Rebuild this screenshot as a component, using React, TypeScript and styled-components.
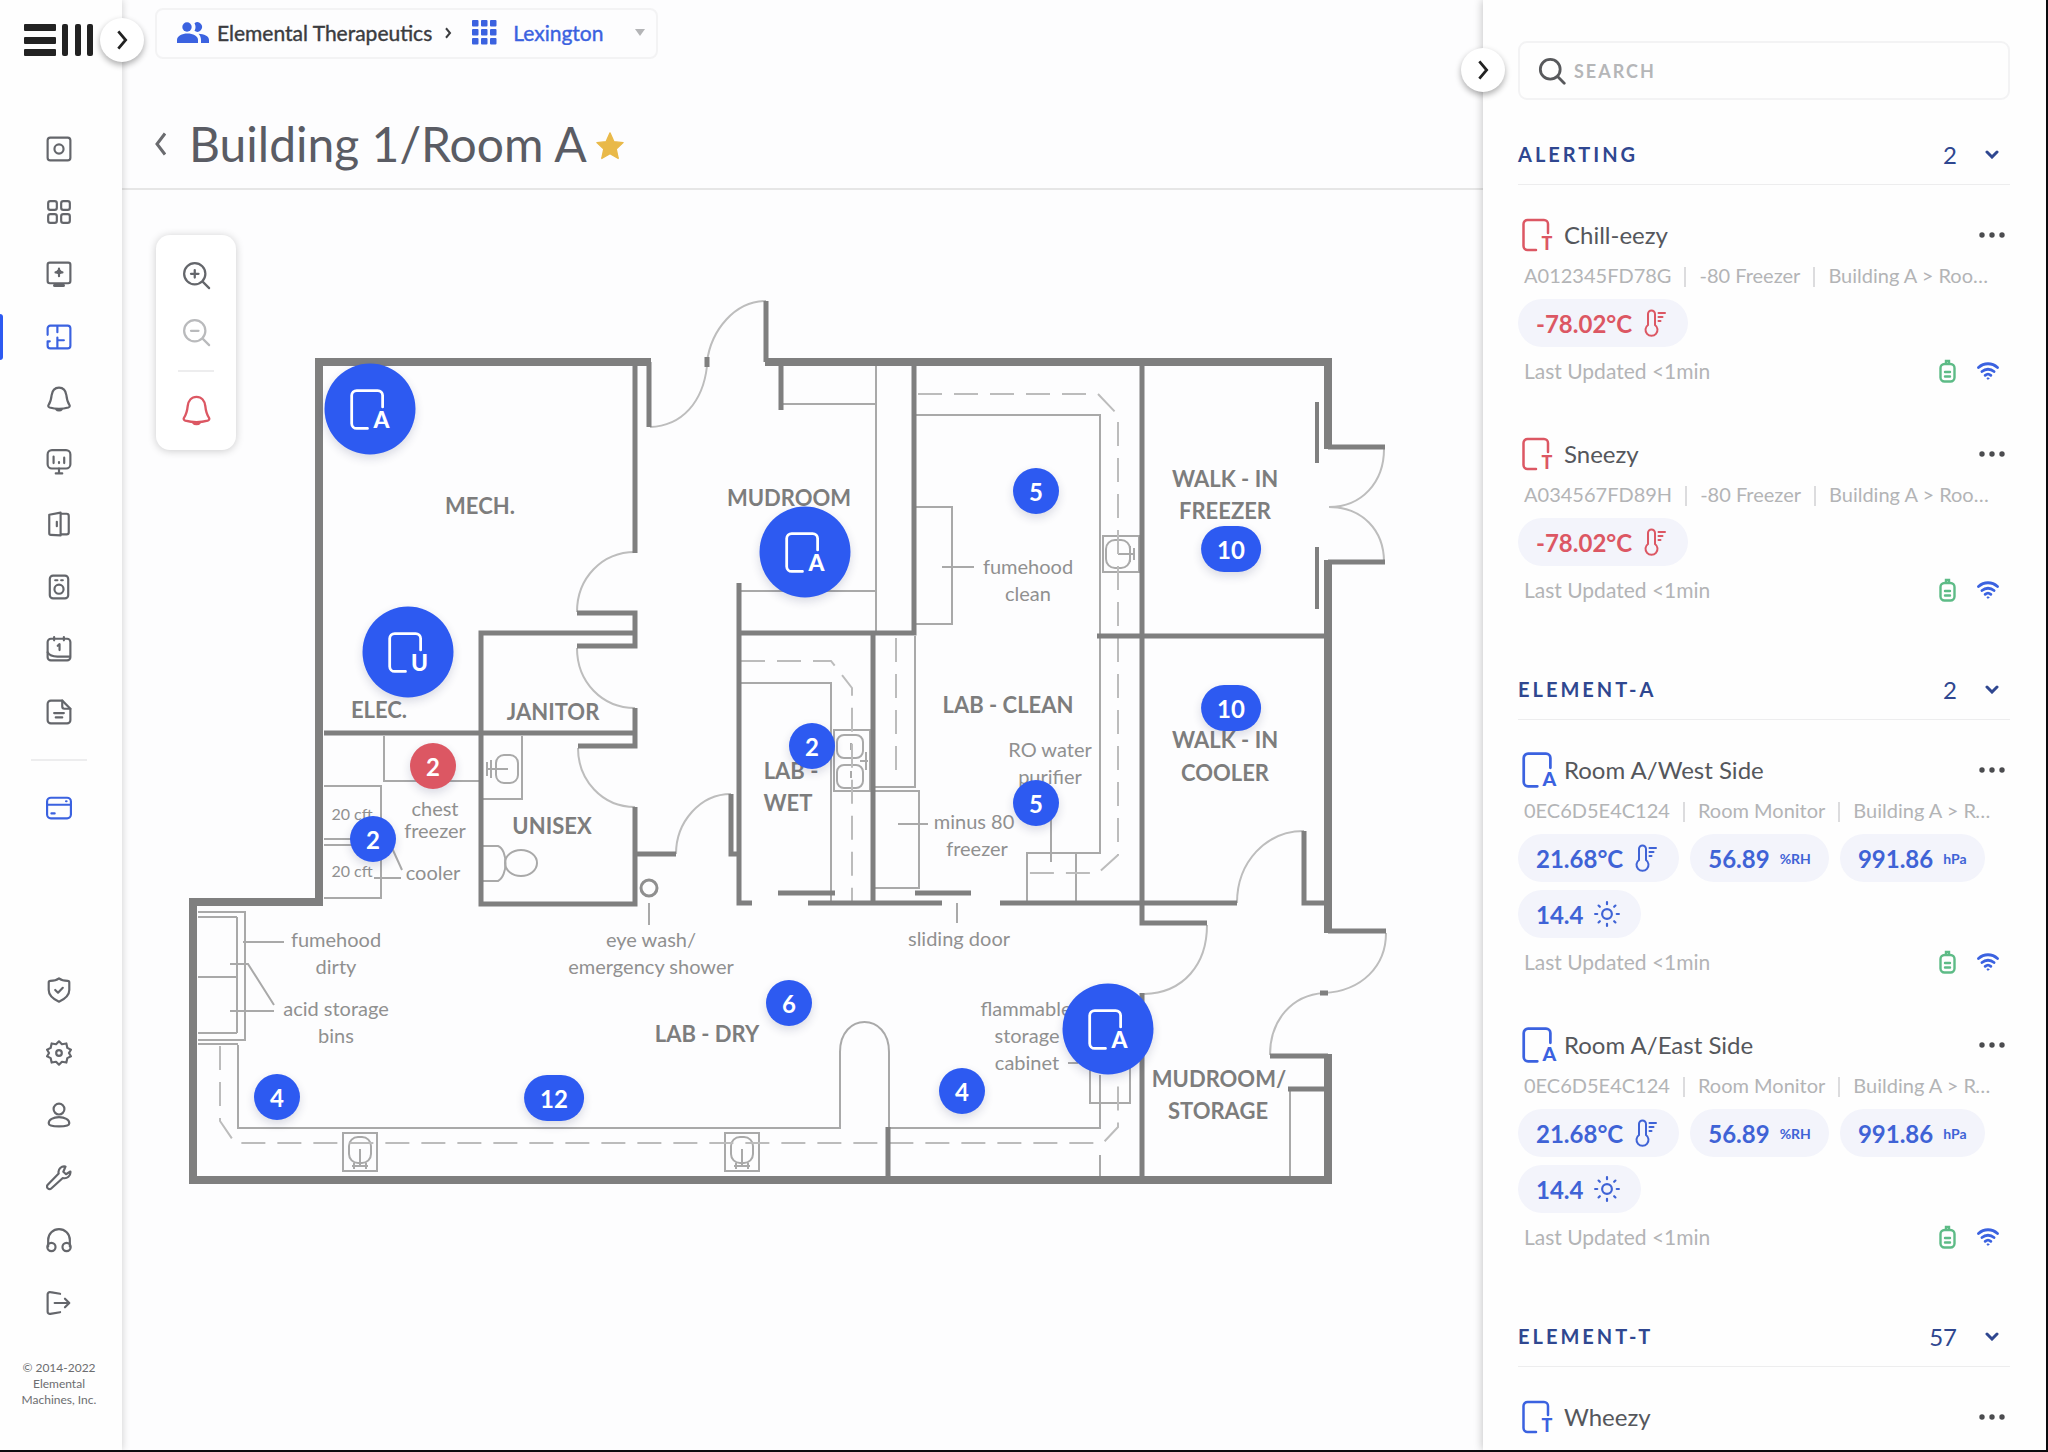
import React, { useState } from "react";
import styled, { createGlobalStyle, css } from "styled-components";

const color = {
  blue: "#2d5af1",
  link: "#3b62e0",
  navy: "#2f4790",
  reading: "#3f63d6",
  red: "#dc5763",
  gold: "#e9b949",
  ink: "#55575c",
  icon: "#64666b",
  muted: "#b3b4b6",
  line: "#ededee",
  wall: "#7f7f7f",
  thin: "#a9a9a9",
  pill: "#f3f4fb",
};

const GlobalStyle = createGlobalStyle`
  *, *::before, *::after { box-sizing: border-box; }
  body {
    margin: 0;
    background: #fdfdfe;
    color: ${color.ink};
    font-family: Lato, "Open Sans", "Liberation Sans", sans-serif;
    font-size: 20px;
  }
  button, input, select { font: inherit; color: inherit; }
  button { background: none; border: 0; padding: 0; cursor: pointer; }
  ul { list-style: none; margin: 0; padding: 0; }
  h1, h2, h3, p { margin: 0; font-weight: inherit; font-size: inherit; }
  svg { display: block; flex: none; }
`;

/* ---------- shell ---------- */

const Shell = styled.div`
  display: grid;
  grid-template-columns: 122px minmax(0, 1fr) 563px;
  height: 100vh;
  border-right: 2px solid #0b0b0e;
  border-bottom: 2px solid #0b0b0e;
  overflow: hidden;
`;

const Toggle = styled.button<{ $top: number; $edge: "left" | "right" }>`
  position: absolute;
  top: ${(p) => p.$top}px;
  ${(p) => p.$edge}: -22px;
  z-index: 3;
  display: grid;
  place-items: center;
  width: 44px;
  height: 44px;
  border-radius: 50%;
  background: #fff;
  box-shadow: 0 3px 6px rgba(0, 0, 0, 0.32);
  color: #222;
`;

/* ---------- sidebar ---------- */

const Sidebar = styled.nav`
  position: relative;
  z-index: 2;
  display: flex;
  flex-direction: column;
  align-items: center;
  padding: 24px 4px 42px 0;
  background: #fefefe;
  box-shadow: 1px 0 7px rgba(0, 0, 0, 0.16);
`;

const Logo = styled.a`
  display: block;
  height: 32px;
  margin-bottom: 80px;
`;

const NavList = styled.ul<{ $height: number }>`
  display: flex;
  flex-direction: column;
  justify-content: space-between;
  align-items: center;
  width: 100%;
  height: ${(p) => p.$height}px;
`;

const NavItem = styled.li<{ $active?: boolean }>`
  position: relative;
  display: flex;
  justify-content: center;
  width: 100%;
  ${(p) =>
    p.$active &&
    css`
      &::before {
        content: "";
        position: absolute;
        left: 0;
        top: -10px;
        width: 3px;
        height: 46px;
        border-radius: 0 4px 4px 0;
        background: ${color.blue};
      }
    `}
`;

const NavLink = styled.a<{ $accent?: boolean }>`
  display: block;
  color: ${(p) => (p.$accent ? color.link : color.icon)};
`;

const NavRule = styled.hr`
  width: 56px;
  height: 2px;
  margin: 34px 0;
  border: 0;
  background: ${color.line};
`;

const NavSpacer = styled.div`
  flex: 1;
`;

const Copyright = styled.p`
  margin-top: 44px;
  text-align: center;
  font-size: 12px;
  line-height: 16px;
  color: #6c6d70;
`;

/* ---------- main column ---------- */

const Main = styled.main`
  display: flex;
  flex-direction: column;
  min-width: 0;
`;

const Header = styled.header`
  padding: 8px 33px 0;
  border-bottom: 2px solid #e6e6e6;
`;

const Crumbs = styled.div`
  display: inline-flex;
  align-items: center;
  height: 51px;
  padding: 0 10px 2px 20px;
  border: 2px solid #f3f3f4;
  border-radius: 8px;
  font-size: 21px;
`;

const CrumbLink = styled.a`
  display: flex;
  align-items: center;
  gap: 8px;
  color: #3b3c3f;
  text-decoration: none;
  -webkit-text-stroke: 0.4px currentColor;
`;

const CrumbArrow = styled.span`
  display: flex;
  padding: 0 18px 0 10px;
  color: #3b3c3f;
`;

const SiteField = styled.label`
  display: flex;
  align-items: center;
  gap: 16px;
  color: ${color.link};
`;

const SiteSelect = styled.select`
  width: 105px;
  padding: 0;
  border: 0;
  background: none;
  appearance: none;
  color: ${color.link};
  -webkit-text-stroke: 0.4px currentColor;
  outline: none;
`;

const TitleRow = styled.div`
  display: flex;
  align-items: center;
  height: 129px;
  padding-top: 42px;
  padding-bottom: 2px;
`;

const BackButton = styled.button`
  width: 11px;
  margin-right: 23px;
  color: #6a6b6f;
`;

const Title = styled.h1`
  font-size: 48px;
  line-height: 56px;
  color: #5a5c64;
`;

const StarButton = styled.button`
  margin: 4px 0 0 8px;
  color: ${color.gold};
`;

const Canvas = styled.section`
  position: relative;
  flex: 1;
  min-height: 0;
  padding: 100px 83px 0 58px;
  overflow: hidden;
`;

const Tools = styled.div`
  position: absolute;
  top: 45px;
  left: 34px;
  z-index: 2;
  display: flex;
  flex-direction: column;
  align-items: center;
  gap: 27px;
  width: 80px;
  padding: 25px 0 24px;
  border-radius: 14px;
  background: #fff;
  box-shadow: 0 1px 8px rgba(0, 0, 0, 0.2);
`;

const ToolButton = styled.button<{ $tone: string }>`
  color: ${(p) => p.$tone};
`;

const ToolRule = styled.hr`
  width: 36px;
  height: 2px;
  margin: -4px 0;
  border: 0;
  background: ${color.line};
`;

const Plan = styled.div`
  position: relative;
  width: 100%;
`;

const PlanDrawing = styled.svg`
  width: 100%;
  height: auto;
  overflow: visible;
`;

const RoomName = styled.text`
  font-size: 22px;
  font-weight: 700;
  fill: #7d7d7d;
`;

const Note = styled.text<{ $small?: boolean }>`
  font-size: ${(p) => (p.$small ? 16 : 20)}px;
  fill: #909090;
`;

const pinBase = css`
  position: absolute;
  display: grid;
  place-items: center;
  transform: translate(-50%, -50%);
  color: #fff;
  box-shadow: 0 4px 10px rgba(30, 40, 90, 0.16);
`;

const DevicePin = styled.button`
  ${pinBase}
  width: 91px;
  height: 91px;
  border-radius: 50%;
  background: ${color.blue};
`;

const CountPin = styled.button<{ $alert?: boolean }>`
  ${pinBase}
  min-width: 46px;
  height: 46px;
  padding: 0 16px;
  border-radius: 23px;
  background: ${(p) => (p.$alert ? color.red : color.blue)};
  font-size: 24px;
  font-weight: 700;
`;

/* ---------- right panel ---------- */

const Panel = styled.aside`
  position: relative;
  z-index: 2;
  min-width: 0;
  min-height: 0;
  background: #fefefe;
  box-shadow: -1px 0 8px rgba(0, 0, 0, 0.22);
`;

const PanelScroll = styled.div`
  height: 100%;
  padding: 41px 36px 0 35px;
  overflow-y: auto;
  scrollbar-width: none;
`;

const Search = styled.label`
  display: flex;
  align-items: center;
  gap: 8px;
  height: 59px;
  margin-bottom: 24px;
  padding: 0 18px;
  border: 2px solid #f3f3f4;
  border-radius: 9px;
  color: #58595c;
`;

const SearchInput = styled.input`
  flex: 1;
  min-width: 0;
  padding: 0;
  border: 0;
  background: none;
  outline: none;
  font-size: 18px;
  font-weight: 700;
  letter-spacing: 2px;
  &::placeholder {
    color: #b5b6b8;
    opacity: 1;
  }
`;

const Group = styled.section`
  & + & {
    margin-top: 57px;
  }
`;

const GroupHead = styled.button`
  display: flex;
  align-items: center;
  width: 100%;
  height: 61px;
  border-bottom: 1px solid ${color.line};
  color: ${color.navy};
  text-align: left;
`;

const GroupTitle = styled.h2`
  flex: 1;
  font-size: 20px;
  font-weight: 700;
  letter-spacing: 3px;
`;

const GroupCount = styled.span`
  padding-right: 28px;
  font-size: 24px;
`;

const GroupChevron = styled.span`
  padding-right: 11px;
`;

const DeviceList = styled.ul`
  display: flex;
  flex-direction: column;
  gap: 54px;
  padding-top: 33px;
`;

const DeviceCard = styled.li`
  display: flex;
  flex-direction: column;
  gap: 12px;
`;

const DeviceHead = styled.div`
  display: flex;
  align-items: center;
  gap: 10px;
  height: 33px;
  padding: 0 5px 0 3px;
`;

const AccentIcon = styled.span<{ $alert?: boolean }>`
  flex: none;
  width: 33px;
  color: ${(p) => (p.$alert ? color.red : color.link)};
`;

const DeviceName = styled.h3`
  flex: 1;
  font-size: 24px;
  line-height: 32px;
`;

const MoreButton = styled.button`
  color: #4b4c4f;
`;

const Meta = styled.p`
  padding: 0 14px 0 6px;
  overflow: hidden;
  font-size: 20px;
  line-height: 24px;
  white-space: nowrap;
  text-overflow: ellipsis;
  color: ${color.muted};
`;

const MetaPart = styled.span`
  & + &::before {
    content: "";
    display: inline-block;
    width: 2px;
    height: 20px;
    margin: 0 13px;
    vertical-align: -4px;
    background: #dcdcde;
  }
`;

const Readings = styled.div`
  display: flex;
  flex-wrap: wrap;
  gap: 8px 11px;
`;

const Pill = styled.span<{ $alert?: boolean; $unit?: boolean }>`
  display: inline-flex;
  align-items: center;
  gap: ${(p) => (p.$unit ? 10 : 11)}px;
  height: 48px;
  padding: 0 ${(p) => (p.$unit ? 18 : 21)}px 0 18px;
  border-radius: 24px;
  background: ${color.pill};
  color: ${(p) => (p.$alert ? color.red : color.reading)};
  font-size: 24px;
  font-weight: 700;
`;

const Unit = styled.small`
  font-size: 14px;
`;

const DeviceFoot = styled.div`
  display: flex;
  align-items: center;
  height: 24px;
  padding: 0 11px 0 6px;
  color: ${color.muted};
`;

const Updated = styled.span`
  flex: 1;
  font-size: 21px;
  line-height: 24px;
`;

const Signals = styled.span`
  display: flex;
  align-items: center;
  gap: 21px;
`;

/* ---------- icons ---------- */

type IconProps = { size?: number; stroke?: number; children?: React.ReactNode };

const Icon = ({ size = 26, stroke = 2, children }: IconProps) => (
  <svg
    width={size}
    height={size}
    viewBox="0 0 24 24"
    fill="none"
    stroke="currentColor"
    strokeWidth={stroke}
    strokeLinecap="round"
    strokeLinejoin="round"
    aria-hidden="true"
  >
    {children}
  </svg>
);

const bell = (
  <>
    <path d="M12 1.500c-4 0-6.300 3.200-6.800 7-.4 4-1 6.500-2.900 9.200-.6 1 0 1.800 1 2.100 5.500 1.500 11.900 1.500 17.400 0 1-.3 1.600-1.100 1-2.100-1.900-2.700-2.500-5.200-2.900-9.200-.5-3.800-2.800-7-6.800-7Z" />
    <path d="M9.500 21.500c1 1.400 4 1.400 5 0Z" fill="currentColor" />
  </>
);

const glyphs: Record<string, React.ReactNode> = {
  monitor: (
    <>
      <rect x="1.500" y="1.500" width="21" height="21" rx="2.500" />
      <circle cx="12" cy="12" r="4.200" />
    </>
  ),
  dashboard: (
    <>
      <rect x="2" y="2" width="8" height="8" rx="2" />
      <rect x="14" y="2" width="8" height="8" rx="2" />
      <rect x="2" y="14" width="8" height="8" rx="2" />
      <rect x="14" y="14" width="8" height="8" rx="2" />
    </>
  ),
  gateway: (
    <>
      <rect x="1.500" y="1.500" width="21" height="19" rx="2" />
      <path d="M8 22.500h8" strokeWidth="3" />
      <path d="M12 7v7M8.800 10.500h6.400" />
      <path d="m12 7.500 3 3-3 1.500-3-1.500Z" fill="currentColor" strokeWidth="1" />
    </>
  ),
  floorplan: (
    <path d="M1.500 10V4A2.500 2.500 0 0 1 4 1.500h16A2.500 2.500 0 0 1 22.500 4v16a2.500 2.500 0 0 1-2.500 2.500H4A2.500 2.500 0 0 1 1.500 20v-4M1.500 16h2M10.500 1.500v6M10.500 12.500v10M10.500 15h6" />
  ),
  alerts: bell,
  analytics: (
    <>
      <rect x="1.500" y="1" width="21" height="17" rx="4" />
      <path d="M7 7v6M12 12v1M16.800 8v5M12 18v4M9 22.500h6" />
    </>
  ),
  door: (
    <>
      <path d="M3 3.500 13.500 1.500v21L4.500 22A1.500 1.500 0 0 1 3 20.500ZM13.500 2.500H19A2 2 0 0 1 21 4.500v15a2 2 0 0 1-2 2h-5.500" />
      <path d="M10 10v4" />
    </>
  ),
  appliance: (
    <>
      <rect x="3.500" y="1.500" width="17" height="21" rx="3" />
      <circle cx="12" cy="14" r="4.200" />
      <path d="M8.500 5.800h2M14 5.800h1.500" />
    </>
  ),
  calendar: (
    <>
      <path d="M4.500 2.500h15a3 3 0 0 1 3 3v14a3 3 0 0 1-3 3h-15a3 3 0 0 1-3-3v-14a3 3 0 0 1 3-3Z" />
      <path d="M7.500 1v3M16.500 1v3M1.500 15c2 3.500 5 4 9 4h11.500M10.800 9l1.700-1.500V13" />
    </>
  ),
  report: (
    <>
      <path d="M4.500 1.500H15l7.500 7.500v10.500a3 3 0 0 1-3 3h-15a3 3 0 0 1-3-3v-15a3 3 0 0 1 3-3Z" />
      <path d="M15 1.500V7a2 2 0 0 0 2 2h5.500M7.500 13h9M9 17h6" />
    </>
  ),
  card: (
    <>
      <rect x="1" y="2.500" width="22" height="19" rx="3.500" />
      <path d="M1 9h22M5 17h3M18.500 5.800h.5" />
    </>
  ),
  shield: (
    <>
      <path d="M12 1.200c2.500 2 5.500 2.300 8 2.300a1.500 1.500 0 0 1 1.500 1.500v7c0 5-4.500 8.500-9.500 10.800C7 20.500 2.500 17 2.500 12V5A1.500 1.500 0 0 1 4 3.500c2.500 0 5.500-.3 8-2.300Z" />
      <path d="m8.500 12 2.600 2.500 4.400-4.500" />
    </>
  ),
  settings: (
    <>
      <path d="m12 1.200 2.700 2.700 4.100-.7.900 4.100 3.300 1.700L21.200 12l1.800 3-3.300 1.700-.9 4.100-4.100-.7-2.700 2.700-2.700-2.700-4.100.7-.9-4.100L1 15l1.800-3L1 9l3.300-1.700.9-4.100 4.100.7Z" />
      <circle cx="12" cy="12" r="2.600" />
    </>
  ),
  user: (
    <>
      <circle cx="12" cy="6.500" r="5" />
      <path d="M12 14c5.500 0 9.500 2.500 9.500 5.500 0 2-2 3-9.500 3s-9.500-1-9.500-3C2.500 16.500 6.500 14 12 14Z" />
    </>
  ),
  service: (
    <path d="M18 1.500c-3.500-.8-7.300 2-6.300 6.300L1.600 18.200a2.500 2.500 0 0 0 0 3.300 2.500 2.500 0 0 0 3.500 0L15.500 12c4 1 7.500-2 7-6l-4 2.500-2.500-2.300Z" />
  ),
  support: (
    <>
      <path d="M2 18v-6a10 10 0 0 1 20 0v6" />
      <circle cx="5" cy="18.500" r="3.800" />
      <circle cx="19" cy="18.500" r="3.800" />
    </>
  ),
  logout: (
    <path d="M13 20.500 4 22a2 2 0 0 1-2.500-2V4A2 2 0 0 1 4 2l9 1.500M8 12h13M17.500 8l4 4-4 4" />
  ),
};

const ChevronRight = ({ size = 22, stroke = 3 }: IconProps) => (
  <Icon size={size} stroke={stroke}>
    <path d="m8 2.500 8 9.500-8 9.500" strokeLinecap="butt" strokeLinejoin="miter" />
  </Icon>
);

const LogoMark = () => (
  <svg width="71" height="32" viewBox="0 0 71 32" fill="#222" aria-hidden="true">
    <rect y="0" width="32" height="7" rx="1" />
    <rect y="13" width="32" height="7" rx="1" />
    <rect y="25" width="32" height="7" rx="1" />
    <rect x="38" width="6" height="32" rx="2" />
    <rect x="51" width="6" height="32" rx="2" />
    <rect x="63" width="6" height="32" rx="2" />
  </svg>
);

const DeviceIcon = ({ letter, scale = 1, stroke = 2.5 }: { letter: string; scale?: number; stroke?: number }) => (
  <svg
    width={Math.round(34 * scale)}
    height={Math.round(38 * scale)}
    viewBox="0 0 34 38"
    fill="none"
    stroke="currentColor"
    strokeWidth={stroke}
    strokeLinecap="round"
    aria-hidden="true"
  >
    <path d="M15 34H6.500a4 4 0 0 1-4-4V8a4 4 0 0 1 4-4H23a4 4 0 0 1 4 4v9" />
    <text x="26" y="34" textAnchor="middle" fontSize="18" fontWeight="900" fill="currentColor" stroke="none">
      {letter}
    </text>
  </svg>
);

const ThermometerIcon = () => (
  <svg width="24" height="28" viewBox="0 0 24 28" fill="none" stroke="currentColor" strokeWidth="2" strokeLinecap="round" aria-hidden="true">
    <path d="M5 16V5a3.500 3.500 0 0 1 7 0v11a6 6 0 1 1-7 0Z" />
    <path d="M15.500 4H22M15.500 8h4M15.500 12h2" />
  </svg>
);

const SunIcon = () => (
  <Icon size={26}>
    <circle cx="12" cy="12" r="4.500" />
    <path d="M12 1v2M12 21v2M1 12h2M21 12h2M4.200 4.200l1.200 1.200M18.600 18.600l1.200 1.200M4.200 19.800l1.200-1.200M18.600 5.400l1.200-1.200" />
  </Icon>
);

const BatteryIcon = () => (
  <svg width="17" height="24" viewBox="0 0 17 24" fill="none" stroke="#5dbb86" strokeWidth="2.400" strokeLinecap="round" role="img" aria-label="Battery good">
    <path d="M7 3.500V2h3v1.500" />
    <rect x="1.500" y="5" width="14" height="17.500" rx="4" />
    <path d="M6 13h5M6 17.500h5" />
  </svg>
);

const WifiIcon = () => (
  <svg width="22" height="20" viewBox="0 0 22 20" fill="none" stroke={color.link} strokeWidth="2.800" strokeLinecap="round" role="img" aria-label="Connected">
    <path d="M1.500 6.500c5.500-5 13.500-5 19 0M5 10.500c3.500-3 8.500-3 12 0M8.200 14.300c1.700-1.400 3.900-1.400 5.600 0" />
    <circle cx="11" cy="17.500" r="0.800" fill={color.link} strokeWidth="1" />
  </svg>
);

const DotsIcon = () => (
  <svg width="26" height="8" viewBox="0 0 26 8" fill="currentColor" aria-hidden="true">
    <circle cx="3" cy="4" r="2.700" />
    <circle cx="13" cy="4" r="2.700" />
    <circle cx="23" cy="4" r="2.700" />
  </svg>
);

const PeopleIcon = () => (
  <svg width="32" height="22" viewBox="0 0 32 22" fill={color.link} aria-hidden="true">
    <circle cx="10" cy="5" r="4.700" />
    <path d="M0 21v-3c0-4 5-6.500 10.500-6.500S21 14 21 18v3Z" />
    <path d="M17.500 1.200a4.700 4.700 0 1 1 0 7.600 8 8 0 0 0 0-7.600ZM21.500 11.800C27 12 32 14 32 18v3h-8v-3c0-2.500-1-4.500-2.500-6.200Z" />
  </svg>
);

const GridIcon = () => (
  <svg width="25" height="25" viewBox="0 0 25 25" fill={color.link} aria-hidden="true">
    {[0, 9, 18].map((y) => [0, 9, 18].map((x) => <rect key={`${x}-${y}`} x={x} y={y} width="6.500" height="6.500" rx="1" />))}
  </svg>
);

/* ---------- floor plan ---------- */

const SinkDown = ({ x }: { x: number }) => (
  <g>
    <rect x={x} y="1133" width="34" height="38" />
    <rect x={x + 6} y="1137" width="22" height="26" rx="9" />
    <path d={`M${x + 17} 1149v16M${x + 9} 1166h16M${x + 11} 1163v6M${x + 23} 1163v6`} />
  </g>
);

const rooms: [string, number, number][] = [
  ["MECH.", 480, 514],
  ["MUDROOM", 789, 506],
  ["ELEC.", 379, 718],
  ["JANITOR", 553, 720],
  ["UNISEX", 552, 834],
  ["LAB -", 791, 779],
  ["WET", 788, 811],
  ["LAB - CLEAN", 1008, 713],
  ["LAB - DRY", 707, 1042],
  ["WALK - IN", 1225, 487],
  ["FREEZER", 1225, 519],
  ["WALK - IN", 1225, 748],
  ["COOLER", 1225, 781],
  ["MUDROOM/", 1219, 1087],
  ["STORAGE", 1218, 1119],
];

const notes: [string, number, number][] = [
  ["fumehood", 1028, 574],
  ["clean", 1028, 601],
  ["RO water", 1050, 757],
  ["purifier", 1050, 784],
  ["minus 80", 974, 829],
  ["freezer", 977, 856],
  ["sliding door", 959, 946],
  ["flammable", 1026, 1016],
  ["storage", 1027, 1043],
  ["cabinet", 1027, 1070],
  ["eye wash/", 651, 947],
  ["emergency shower", 651, 974],
  ["fumehood", 336, 947],
  ["dirty", 336, 974],
  ["acid storage", 336, 1016],
  ["bins", 336, 1043],
  ["chest", 435, 816],
  ["freezer", 435, 838],
  ["cooler", 433, 880],
];

const FloorPlan = () => (
  <PlanDrawing viewBox="180 290 1220 910" role="img" aria-label="Floor plan of Room A">
    <g fill="none" stroke={color.thin} strokeWidth="2">
      {/* counters and closets */}
      <path d="M783 404H876M876 366V633M739 591H876" />
      <path d="M915 636V787H873M873 791H919V888H873" />
      <path d="M741 683H831V902" />
      <path d="M916 415H1100V853H1027V903M1076 853V903" />
      <path d="M916 507H952V624H916" />
      <path d="M238 1045V1128H840V1052C840 1012 889 1012 889 1052V1128H1100V1075M1100 1155V1176" />
      <path d="M1090 1060V1103H1130V1060M1290 1091V1176" />
      <path d="M198 912H245V1040H198M237 917V1033M198 917H237M198 977H237M198 1033H237M198 1044H238" />
      <path d="M324 786H381V839H324M324 845H381V898H324M384 736V781H480" />
      {/* sinks and toilet */}
      <path d="M1103 536H1139V572H1103Z" />
      <rect x="1106" y="540" width="24" height="28" rx="9" />
      <path d="M1118 554H1134M1130 546V562M1134 548V560" />
      <path d="M834 730H870V791H834Z" />
      <rect x="837" y="735" width="26" height="23" rx="7" />
      <rect x="837" y="765" width="26" height="23" rx="7" />
      <path d="M851 743V750M851 771V778M860 761H868M866 752V770" />
      <path d="M483 799H522V736" />
      <rect x="496" y="755" width="22" height="28" rx="8" />
      <path d="M488 769H508M491 760V778M487 762V776" />
      <path d="M483 846H498C508 850 508 876 498 881H483" />
      <ellipse cx="521" cy="863" rx="16" ry="13" />
      <SinkDown x={343} />
      <SinkDown x={725} />
      {/* door swings */}
      <g stroke="#bdbdbd">
        <path d="M766 301C735 301 711 330 707 362M707 366C703 402 682 426 650 427" />
        <path d="M635 552C602 552 577 578 577 612M577 648C577 682 602 708 635 708" />
        <path d="M578 748C578 780 602 807 635 807M676 854C676 822 700 794 731 794" />
        <path d="M1384 449C1384 482 1362 507 1329 507C1362 507 1384 530 1384 562" />
        <path d="M1237 903C1237 862 1266 831 1304 831M1207 925C1207 964 1184 993 1144 994" />
        <path d="M1386 933C1386 966 1362 991 1324 993C1292 995 1270 1020 1270 1055" />
      </g>
      {/* leader lines */}
      <path d="M942 567H974M898 824H928M1051 820V862M957 903V923M649 903V925M243 942H284M230 964H248L274 1005M230 1011H274M374 878H401M392 848L402 870M1068 1063H1078" />
    </g>
    {/* overhead services */}
    <g fill="none" stroke="#bcbcbc" strokeWidth="2" strokeDasharray="24 12">
      <path d="M918 394H1098L1118 415V855L1098 873H1027" />
      <path d="M741 661H831L852 688V902M896 638V778" />
      <path d="M220 1046V1121L235 1143H1103L1118 1127V1075" />
    </g>
    {/* interior walls */}
    <g fill="none" stroke={color.wall} strokeWidth="5">
      <path d="M635 362V553M649 362V427M577 613H635V646H577M635 708V746H578M635 807V904H481V633H635M324 733H637M635 854H676M731 794V854H739M739 583V903H752" />
      <path d="M766 301V362M781 362V410M914 362V633H739M873 633V902M778 893H835M808 903H942M915 893H971M1000 903H1237" />
      <path d="M1142 362V923H1207M1097 636H1326M1142 993V1180M1304 831V903H1326M1328 447H1385M1328 562H1385M1328 931H1386M1270 1056H1328M1288 1089H1326M888 1127V1180" />
      <path d="M1317 402V463M1317 547V609" strokeWidth="4" />
      <path d="M707 357V367M1320 993H1328" />
    </g>
    {/* exterior walls */}
    <g fill="none" stroke={color.wall} strokeWidth="8">
      <path d="M651 362H319V902H193V1180H1328V1054" />
      <path d="M765 362H1328V449M1328 560V933" />
    </g>
    <circle cx="649" cy="888" r="8" fill="none" stroke="#8f8f8f" strokeWidth="3" />
    {rooms.map(([name, x, y]) => (
      <RoomName key={`${name}-${y}`} x={x} y={y} textAnchor="middle">
        {name}
      </RoomName>
    ))}
    {notes.map(([text, x, y]) => (
      <Note key={`${text}-${x}-${y}`} x={x} y={y} textAnchor="middle">
        {text}
      </Note>
    ))}
    <Note $small x="352" y="820" textAnchor="middle">20 cft</Note>
    <Note $small x="352" y="877" textAnchor="middle">20 cft</Note>
  </PlanDrawing>
);

type PinData = { x: number; y: number; letter?: string; count?: number; alert?: boolean };

const pins: PinData[] = [
  { x: 370, y: 409, letter: "A" },
  { x: 805, y: 552, letter: "A" },
  { x: 408, y: 652, letter: "U" },
  { x: 1108, y: 1029, letter: "A" },
  { x: 1036, y: 491, count: 5 },
  { x: 1231, y: 549, count: 10 },
  { x: 1231, y: 708, count: 10 },
  { x: 812, y: 746, count: 2 },
  { x: 1036, y: 803, count: 5 },
  { x: 433, y: 766, count: 2, alert: true },
  { x: 373, y: 839, count: 2 },
  { x: 789, y: 1003, count: 6 },
  { x: 962, y: 1091, count: 4 },
  { x: 277, y: 1097, count: 4 },
  { x: 554, y: 1098, count: 12 },
];

const Pin = ({ x, y, letter, count, alert }: PinData) => {
  const place = { left: `${((x - 180) / 1220) * 100}%`, top: `${((y - 290) / 910) * 100}%` };
  return letter ? (
    <DevicePin type="button" style={place} aria-label={`Element-${letter}`}>
      <DeviceIcon letter={letter} scale={1.25} stroke={2.2} />
    </DevicePin>
  ) : (
    <CountPin type="button" style={place} $alert={alert}>
      {count}
    </CountPin>
  );
};

/* ---------- data ---------- */

const mainNav = [
  ["monitor", "Monitor"],
  ["dashboard", "Dashboard"],
  ["gateway", "Gateways"],
  ["floorplan", "Floor plans"],
  ["alerts", "Alerts"],
  ["analytics", "Analytics"],
  ["door", "Doors"],
  ["appliance", "Equipment"],
  ["calendar", "Calendar"],
  ["report", "Reports"],
];

const lowerNav = [
  ["shield", "Compliance"],
  ["settings", "Settings"],
  ["user", "Account"],
  ["service", "Service"],
  ["support", "Support"],
  ["logout", "Log out"],
];

type Reading = { value: string; unit?: string; icon?: "temperature" | "light" };
type Device = { name: string; letter: string; alert?: boolean; meta: string[]; readings: Reading[] };

const freezer: Reading[] = [{ value: "-78.02°C", icon: "temperature" }];
const room: Reading[] = [
  { value: "21.68°C", icon: "temperature" },
  { value: "56.89", unit: "%RH" },
  { value: "991.86", unit: "hPa" },
  { value: "14.4", icon: "light" },
];

const groups: { title: string; count: number; devices: Device[] }[] = [
  {
    title: "ALERTING",
    count: 2,
    devices: [
      { name: "Chill-eezy", letter: "T", alert: true, meta: ["A012345FD78G", "-80 Freezer", "Building A > Room A"], readings: freezer },
      { name: "Sneezy", letter: "T", alert: true, meta: ["A034567FD89H", "-80 Freezer", "Building A > Room A"], readings: freezer },
    ],
  },
  {
    title: "ELEMENT-A",
    count: 2,
    devices: [
      { name: "Room A/West Side", letter: "A", meta: ["0EC6D5E4C124", "Room Monitor", "Building A > Room A"], readings: room },
      { name: "Room A/East Side", letter: "A", meta: ["0EC6D5E4C124", "Room Monitor", "Building A > Room A"], readings: room },
    ],
  },
  {
    title: "ELEMENT-T",
    count: 57,
    devices: [{ name: "Wheezy", letter: "T", meta: [], readings: [] }],
  },
];

const DeviceEntry = ({ device }: { device: Device }) => (
  <DeviceCard>
    <DeviceHead>
      <AccentIcon $alert={device.alert}>
        <DeviceIcon letter={device.letter} scale={device.letter === "A" ? 1.1 : 1} />
      </AccentIcon>
      <DeviceName>{device.name}</DeviceName>
      <MoreButton type="button" aria-label={`More about ${device.name}`}>
        <DotsIcon />
      </MoreButton>
    </DeviceHead>
    {device.meta.length > 0 && (
      <Meta>
        {device.meta.map((part) => (
          <MetaPart key={part}>{part}</MetaPart>
        ))}
      </Meta>
    )}
    {device.readings.length > 0 && (
      <>
        <Readings>
          {device.readings.map((r) => (
            <Pill key={r.value} $alert={device.alert} $unit={Boolean(r.unit)}>
              {r.value}
              {r.unit && <Unit>{r.unit}</Unit>}
              {r.icon === "temperature" && <ThermometerIcon />}
              {r.icon === "light" && <SunIcon />}
            </Pill>
          ))}
        </Readings>
        <DeviceFoot>
          <Updated>Last Updated &lt;1min</Updated>
          <Signals>
            <BatteryIcon />
            <WifiIcon />
          </Signals>
        </DeviceFoot>
      </>
    )}
  </DeviceCard>
);

const DeviceGroup = ({ title, count, devices }: (typeof groups)[number]) => {
  const [open, setOpen] = useState(true);
  return (
    <Group>
      <GroupHead type="button" aria-expanded={open} onClick={() => setOpen(!open)}>
        <GroupTitle>{title}</GroupTitle>
        <GroupCount>{count}</GroupCount>
        <GroupChevron>
          <svg width="14" height="10" viewBox="0 0 14 10" fill="none" stroke="currentColor" strokeWidth="3" strokeLinecap="round" aria-hidden="true">
            <path d="m2 3 5 5 5-5" />
          </svg>
        </GroupChevron>
      </GroupHead>
      {open && (
        <DeviceList>
          {devices.map((d) => (
            <DeviceEntry key={d.name} device={d} />
          ))}
        </DeviceList>
      )}
    </Group>
  );
};

export default function App() {
  return (
    <>
      <GlobalStyle />
      <Shell>
        <Sidebar aria-label="Main">
          <Logo href="#" aria-label="Home">
            <LogoMark />
          </Logo>
          <Toggle type="button" $top={18} $edge="right" aria-label="Expand menu">
            <ChevronRight />
          </Toggle>
          <NavList $height={589}>
            {mainNav.map(([glyph, label]) => (
              <NavItem key={glyph} $active={glyph === "floorplan"}>
                <NavLink href="#" aria-label={label} $accent={glyph === "floorplan"}>
                  <Icon>{glyphs[glyph]}</Icon>
                </NavLink>
              </NavItem>
            ))}
          </NavList>
          <NavRule />
          <NavItem as="div">
            <NavLink href="#" aria-label="Billing" $accent>
              <Icon>{glyphs.card}</Icon>
            </NavLink>
          </NavItem>
          <NavSpacer />
          <NavList $height={339}>
            {lowerNav.map(([glyph, label]) => (
              <NavItem key={glyph}>
                <NavLink href="#" aria-label={label}>
                  <Icon>{glyphs[glyph]}</Icon>
                </NavLink>
              </NavItem>
            ))}
          </NavList>
          <Copyright>
            © 2014-2022
            <br />
            Elemental
            <br />
            Machines, Inc.
          </Copyright>
        </Sidebar>

        <Main>
          <Header>
            <Crumbs>
              <CrumbLink href="#">
                <PeopleIcon />
                Elemental Therapeutics
              </CrumbLink>
              <CrumbArrow>
                <ChevronRight size={12} stroke={4} />
              </CrumbArrow>
              <SiteField>
                <GridIcon />
                <SiteSelect aria-label="Site" defaultValue="Lexington">
                  <option>Lexington</option>
                </SiteSelect>
                <svg width="12" height="8" viewBox="0 0 12 8" fill="#b4b5b7" aria-hidden="true">
                  <path d="M1 0h10L6 7Z" />
                </svg>
              </SiteField>
            </Crumbs>
            <TitleRow>
              <BackButton type="button" aria-label="Back">
                <svg width="11" height="24" viewBox="0 0 11 24" fill="none" stroke="currentColor" strokeWidth="3" aria-hidden="true">
                  <path d="M10 1.500 2 12l8 10.500" />
                </svg>
              </BackButton>
              <Title>Building 1/Room A</Title>
              <StarButton type="button" aria-label="Favourite">
                <svg width="30" height="30" viewBox="0 0 24 24" fill="currentColor" stroke="currentColor" strokeLinejoin="round" aria-hidden="true">
                  <path d="m12 1.500 3.100 7 7.400.8-5.500 5.100 1.600 7.600-6.600-3.900L5.400 22 7 14.400 1.500 9.300l7.400-.8Z" />
                </svg>
              </StarButton>
            </TitleRow>
          </Header>

          <Canvas aria-label="Floor plan">
            <Tools>
              <ToolButton type="button" $tone={color.icon} aria-label="Zoom in">
                <Icon size={30} stroke={1.8}>
                  <circle cx="11" cy="11" r="8.500" />
                  <path d="m17.500 17.500 5 5M11 8v6M8 11h6" />
                </Icon>
              </ToolButton>
              <ToolButton type="button" $tone="#b9babc" aria-label="Zoom out">
                <Icon size={30} stroke={1.8}>
                  <circle cx="11" cy="11" r="8.500" />
                  <path d="m17.500 17.500 5 5M8 11h6" />
                </Icon>
              </ToolButton>
              <ToolRule />
              <ToolButton type="button" $tone={color.red} aria-label="Show alerts">
                <Icon size={31} stroke={1.8}>
                  {bell}
                </Icon>
              </ToolButton>
            </Tools>
            <Plan>
              <FloorPlan />
              {pins.map((pin) => (
                <Pin key={`${pin.x}-${pin.y}`} {...pin} />
              ))}
            </Plan>
          </Canvas>
        </Main>

        <Panel aria-label="Devices">
          <Toggle type="button" $top={48} $edge="left" aria-label="Collapse panel">
            <ChevronRight />
          </Toggle>
          <PanelScroll>
            <Search>
              <Icon size={28} stroke={2.4}>
                <circle cx="10.500" cy="10.500" r="8.500" />
                <path d="m17 17 5.500 5.500" />
              </Icon>
              <SearchInput type="search" placeholder="SEARCH" aria-label="Search devices" />
            </Search>
            {groups.map((g) => (
              <DeviceGroup key={g.title} {...g} />
            ))}
          </PanelScroll>
        </Panel>
      </Shell>
    </>
  );
}
